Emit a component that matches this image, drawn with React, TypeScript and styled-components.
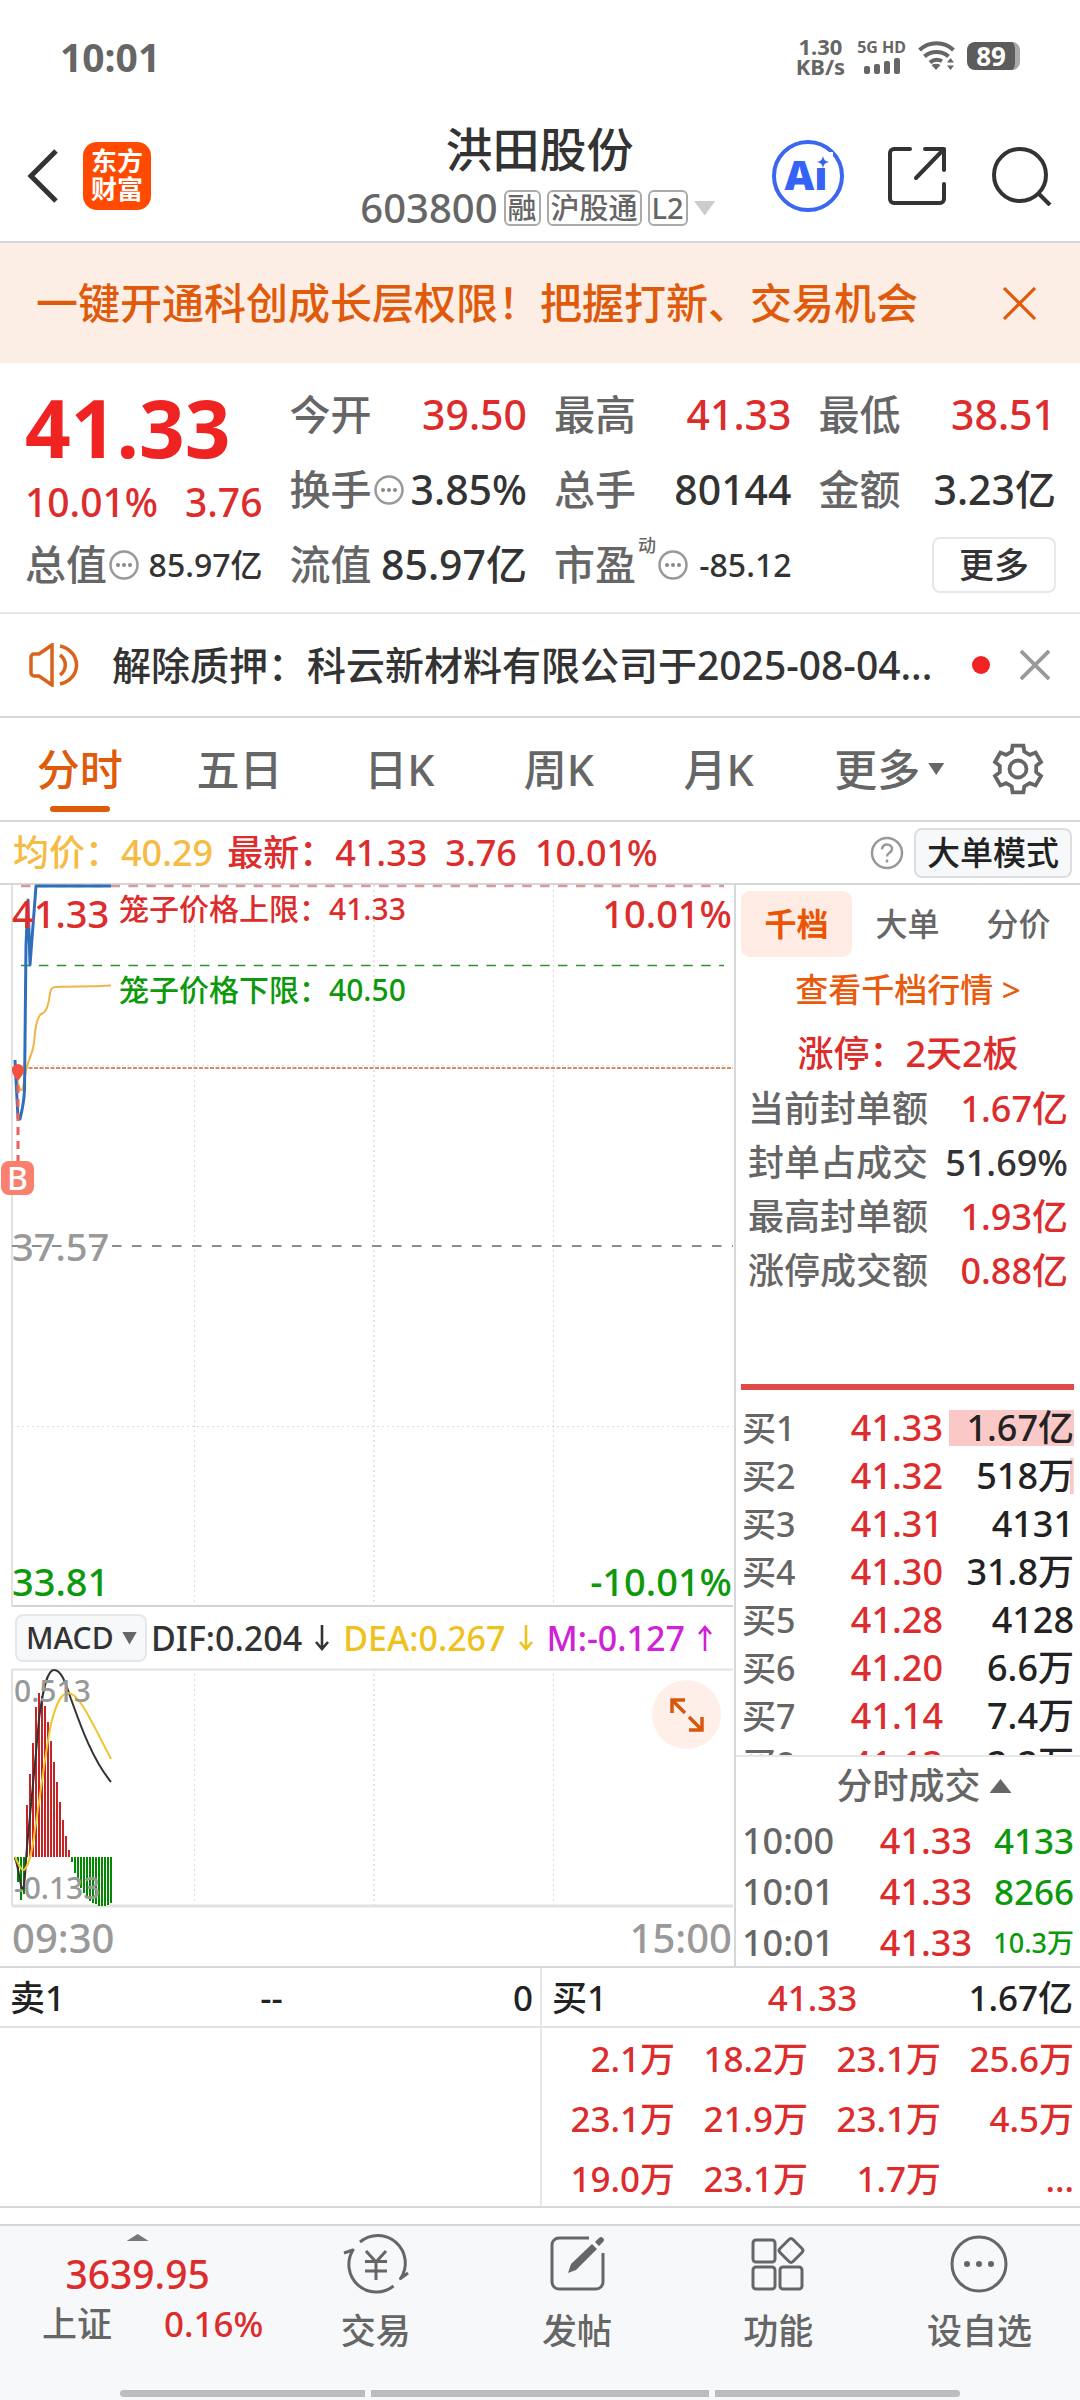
import React from "react";
import styled, { createGlobalStyle, css } from "styled-components";

const c = {
  text: "#333",
  sub: "#666",
  faint: "#999",
  red: "#dd2c2c",
  green: "#0c990c",
  orange: "#e05a0c",
  line: "#d6d7d9",
  soft: "#e6e7e9",
};

const Global = createGlobalStyle`
  * { box-sizing: border-box; }
  body {
    margin: 0;
    background: #fff;
    color: ${c.text};
    font-family: "Noto Sans", "Noto Sans CJK SC", sans-serif;
    font-weight: 500;
    line-height: 1;
  }
  button, select {
    font: inherit;
    color: inherit;
    border: 0;
    padding: 0;
    margin: 0;
    background: none;
    white-space: nowrap;
  }
  h1, p, dl, dd, dt { margin: 0; font-weight: inherit; }
  svg { display: block; flex: none; }
  table { border-collapse: collapse; width: 100%; table-layout: fixed; }
  th, td { padding: 0; font-weight: inherit; white-space: nowrap; }
`;

type Tone = "text" | "sub" | "faint" | "red" | "green" | "orange";

const Page = styled.div`
  display: flex;
  flex-direction: column;
  min-height: 100vh;
  overflow: hidden;
`;

/* ---------- status bar ---------- */
const StatusBar = styled.div`
  display: flex;
  align-items: center;
  justify-content: space-between;
  height: 112px;
  padding: 0 60px;
  color: ${c.sub};
  font-weight: 700;
`;
const Clock = styled.span`
  font-size: 39px;
`;
const StatusRight = styled.div`
  display: flex;
  align-items: center;
  gap: 12px;
`;
const StatusStack = styled.div<{ $size: number }>`
  display: flex;
  flex-direction: column;
  align-items: center;
  gap: 2px;
  font-size: ${(p) => p.$size}px;
  line-height: 18px;
`;
const Battery = styled.span`
  display: flex;
  align-items: center;
  justify-content: center;
  width: 53px;
  height: 28px;
  border-radius: 8px;
  background: #5c5c5c;
  border-right: 5px solid #aaa;
  color: #fff;
  font-size: 26px;
  font-weight: 700;
`;

/* ---------- header ---------- */
const Header = styled.header`
  display: grid;
  grid-template-columns: 1fr auto 1fr;
  align-items: center;
  height: 131px;
  padding: 0 28px 2px 27px;
  border-bottom: 2px solid ${c.line};
`;
const HeaderSide = styled.div<{ $end?: boolean }>`
  display: flex;
  align-items: center;
  gap: ${(p) => (p.$end ? 44 : 24)}px;
  justify-content: ${(p) => (p.$end ? "flex-end" : "flex-start")};
`;
const Logo = styled.div`
  width: 68px;
  height: 68px;
  border-radius: 14px;
  background: #ff4a00;
  color: #fff;
  font-size: 26px;
  font-weight: 700;
  line-height: 28px;
  text-align: center;
  padding-top: 5px;
`;
const TitleBlock = styled.div`
  display: flex;
  flex-direction: column;
  align-items: center;
  gap: 15px;
  padding-top: 3px;
`;
const Title = styled.h1`
  font-size: 47px;
`;
const SubTitle = styled.div`
  display: flex;
  align-items: center;
  gap: 6px;
  padding-right: 3px;
  font-size: 40px;
  color: ${c.sub};
`;
const Tag = styled.span`
  height: 36px;
  padding: 0 2px;
  border: 2px solid #aaa;
  border-radius: 6px;
  font-size: 29px;
  line-height: 31px;
`;
const Triangle = styled.span<{ $w: number; $h: number; $color: string; $up?: boolean }>`
  display: inline-block;
  flex: none;
  width: ${(p) => p.$w}px;
  height: ${(p) => p.$h}px;
  background: ${(p) => p.$color};
  clip-path: ${(p) =>
    p.$up ? "polygon(50% 0, 100% 100%, 0 100%)" : "polygon(0 0, 100% 0, 50% 100%)"};
`;

/* ---------- promo banner ---------- */
const Banner = styled.div`
  display: flex;
  align-items: center;
  justify-content: space-between;
  height: 120px;
  padding: 0 44px 0 36px;
  background: #fdeee5;
  color: ${c.orange};
  font-size: 42px;
`;

/* ---------- quote ---------- */
const Quote = styled.section`
  display: grid;
  grid-template-columns: repeat(4, 1fr);
  grid-auto-rows: 75px;
  column-gap: 27px;
  padding: 14px 24px 10px 25px;
  border-bottom: 2px solid ${c.soft};
`;
const PriceBlock = styled.div`
  grid-row: span 2;
  display: flex;
  flex-direction: column;
  justify-content: space-between;
  padding: 10px 0 6px;
  color: ${c.red};
`;
const BigPrice = styled.div`
  font-size: 80px;
  font-weight: 700;
  color: #f02323;
`;
const Split = styled.div`
  display: flex;
  justify-content: space-between;
  font-size: 39px;
`;
const Metric = styled.div`
  display: flex;
  align-items: center;
  gap: 2px;
  font-size: 41px;
`;
const MetricLabel = styled.span`
  color: ${c.sub};
`;
const MetricSup = styled.sup`
  align-self: flex-start;
  margin-top: 8px;
  font-size: 18px;
  line-height: 20px;
  color: ${c.sub};
`;
const MetricValue = styled.span<{ $tone?: Tone; $small?: boolean }>`
  margin-left: auto;
  font-size: ${(p) => (p.$small ? 32 : 41)}px;
  color: ${(p) => c[p.$tone || "text"]};
`;
const MoreButton = styled.button`
  align-self: center;
  justify-self: end;
  width: 124px;
  height: 56px;
  border: 2px solid ${c.soft};
  border-radius: 8px;
  font-size: 35px;
`;

/* ---------- notice ---------- */
const Notice = styled.div`
  display: flex;
  align-items: center;
  height: 104px;
  padding: 0 30px 0 28px;
  border-bottom: 2px solid ${c.line};
`;
const NoticeText = styled.p`
  flex: 1;
  margin-left: 32px;
  font-size: 39px;
  line-height: 56px;
  white-space: nowrap;
  overflow: hidden;
`;
const Dot = styled.span`
  width: 18px;
  height: 18px;
  margin: 0 30px 0 18px;
  border-radius: 50%;
  background: #f02323;
`;

/* ---------- period tabs ---------- */
const Periods = styled.nav`
  display: grid;
  grid-template-columns: repeat(6, 4fr) 3fr;
  height: 104px;
  padding-right: 2px;
  border-bottom: 2px solid ${c.line};
`;
const Period = styled.button<{ $on?: boolean }>`
  position: relative;
  display: flex;
  align-items: center;
  justify-content: center;
  gap: 8px;
  font-size: 43px;
  color: ${(p) => (p.$on ? c.orange : c.sub)};
  ${(p) =>
    p.$on &&
    css`
      &::after {
        content: "";
        position: absolute;
        bottom: 8px;
        width: 60px;
        height: 6px;
        border-radius: 3px;
        background: ${c.orange};
      }
    `}
`;
const MorePeriods = styled(Period)`
  justify-content: flex-end;
  padding-right: 14px;
`;

/* ---------- averages line ---------- */
const InfoBar = styled.div`
  display: flex;
  align-items: center;
  height: 63px;
  padding: 0 8px 0 13px;
  border-bottom: 2px solid ${c.line};
  font-size: 36px;
  color: ${c.red};
`;
const Average = styled.span`
  margin-right: 14px;
  color: #f5bb45;
`;
const InfoValue = styled.span`
  margin-right: 18px;
`;
const ModeButton = styled.button`
  height: 50px;
  margin-left: 10px;
  padding: 0 11px;
  border: 2px solid #dcdee2;
  border-radius: 8px;
  background: #f7f8fa;
  color: #222;
  font-size: 33px;
`;
const HelpButton = styled.button`
  margin-left: auto;
`;

/* ---------- main body ---------- */
const Body = styled.main`
  display: flex;
  border-bottom: 2px solid ${c.line};
`;
const ChartColumn = styled.section`
  flex: 1;
  min-width: 0;
`;
const Plot = styled.div`
  position: relative;
  > svg {
    width: 100%;
    height: auto;
    overflow: visible;
  }
`;
const PlotLabel = styled.span<{
  $tone: Tone;
  $size: number;
  $top?: number;
  $bottom?: number;
  $left?: number;
  $right?: number;
}>`
  position: absolute;
  color: ${(p) => c[p.$tone]};
  font-size: ${(p) => p.$size}px;
  ${(p) => (p.$top !== undefined ? `top: ${p.$top}px;` : "")}
  ${(p) => (p.$bottom !== undefined ? `bottom: ${p.$bottom}px;` : "")}
  ${(p) => (p.$left !== undefined ? `left: ${p.$left}px;` : "")}
  ${(p) => (p.$right !== undefined ? `right: ${p.$right}px;` : "")}
`;
const TradeMark = styled.span`
  position: absolute;
  left: 1px;
  top: 276px;
  width: 33px;
  height: 34px;
  border-radius: 8px;
  background: #f9806f;
  color: #fff;
  font-size: 32px;
  line-height: 34px;
  text-align: center;
`;
const IndicatorBar = styled.div`
  display: flex;
  align-items: center;
  height: 62px;
  padding-left: 15px;
  font-size: 34px;
`;
const IndicatorPick = styled.label`
  position: relative;
  display: flex;
  align-items: center;
  width: 132px;
  height: 48px;
  margin-right: 4px;
  border: 2px solid ${c.soft};
  border-radius: 8px;
  background: #f7f8fa;
  font-size: 30px;
  select {
    appearance: none;
    width: 100%;
    height: 100%;
    padding-left: 9px;
    outline: 0;
  }
  span {
    position: absolute;
    right: 8px;
    pointer-events: none;
  }
`;
const Reading = styled.span<{ $color: string }>`
  display: flex;
  align-items: center;
  gap: 13px;
  margin-right: 14px;
  color: ${(p) => p.$color};
`;
const ExpandButton = styled.button`
  position: absolute;
  right: 13px;
  top: 11px;
  display: flex;
  align-items: center;
  justify-content: center;
  width: 69px;
  height: 69px;
  border-radius: 50%;
  background: #fef0e8;
`;
const TimeAxis = styled.div`
  display: flex;
  justify-content: space-between;
  align-items: center;
  height: 59px;
  padding: 2px 2px 0 12px;
  font-size: 40px;
  color: ${c.faint};
`;

/* ---------- side panel ---------- */
const Side = styled.aside`
  display: flex;
  flex-direction: column;
  width: 346px;
  border-left: 2px solid ${c.line};
`;
const SideTabs = styled.div`
  display: grid;
  grid-template-columns: repeat(3, 1fr);
  height: 66px;
  margin: 6px 6px 0 5px;
`;
const SideTab = styled.button<{ $on?: boolean }>`
  border-radius: 9px;
  font-size: 32px;
  color: ${(p) => (p.$on ? "#ea5504" : c.sub)};
  font-weight: ${(p) => (p.$on ? 700 : 500)};
  background: ${(p) => (p.$on ? "#feece4" : "none")};
`;
const SideLink = styled.a`
  align-self: center;
  line-height: 65px;
  font-size: 33px;
  color: #ea5a0c;
  text-decoration: none;
`;
const LimitTitle = styled.p`
  text-align: center;
  font-size: 36px;
  line-height: 64px;
  color: ${c.red};
`;
const SealList = styled.dl`
  padding: 0 12px 86px 12px;
  margin-top: -4px;
`;
const SealRow = styled.div`
  display: flex;
  justify-content: space-between;
  align-items: center;
  height: 54px;
  font-size: 36px;
`;
const SealLabel = styled.dt`
  color: ${c.sub};
`;
const SealValue = styled.dd<{ $tone: Tone }>`
  color: ${(p) => c[p.$tone]};
`;
const RedBar = styled.div`
  height: 6px;
  margin: 0 6px 0 5px;
  background: #df4b4b;
`;
const BookScroll = styled.div`
  height: 367px;
  padding: 14px 6px 0 6px;
  overflow: hidden;
  border-bottom: 2px solid ${c.soft};
`;
const BookRow = styled.tr`
  height: 48px;
  font-size: 36px;
`;
const BookLabel = styled.th`
  width: 80px;
  text-align: left;
  font-size: 34px;
  color: ${c.sub};
`;
const BookPrice = styled.td`
  text-align: right;
  color: ${c.red};
`;
const BookVolume = styled.td`
  width: 131px;
  padding-left: 6px;
`;
const VolumeBar = styled.div`
  height: 36px;
  line-height: 36px;
  text-align: right;
  color: #222;
  background: linear-gradient(#fbc8c8, #fbc8c8) right / var(--fill) 100% no-repeat;
`;
const DealsToggle = styled.button`
  display: flex;
  align-items: center;
  justify-content: center;
  gap: 9px;
  height: 58px;
  padding-left: 32px;
  font-size: 36px;
  color: ${c.sub};
`;
const Deals = styled.div`
  height: 150px;
  padding: 0 6px;
`;
const DealRow = styled.tr`
  height: 51px;
  font-size: 36px;
`;
const DealTime = styled.td`
  color: ${c.sub};
`;
const DealPrice = styled.td`
  width: 130px;
  text-align: right;
  color: ${c.red};
`;
const DealVolume = styled.td<{ $small?: boolean }>`
  width: 102px;
  text-align: right;
  color: ${c.green};
  font-size: ${(p) => (p.$small ? 27 : 35)}px;
`;

/* ---------- level-2 queue ---------- */
const Queue = styled.section`
  display: grid;
  grid-template-columns: 1fr 1fr;
  border-bottom: 2px solid ${c.line};
`;
const QueueSide = styled.div`
  & + & {
    border-left: 2px solid ${c.soft};
  }
`;
const QueueHead = styled.div`
  display: grid;
  grid-template-columns: 1fr 1fr 1fr;
  align-items: center;
  height: 60px;
  padding: 0 7px 0 10px;
  border-bottom: 2px solid #dfe3e4;
  font-size: 35px;
  color: #222;
`;
const QueueCell = styled.span<{ $align?: string; $tone?: Tone }>`
  text-align: ${(p) => p.$align || "left"};
  color: ${(p) => (p.$tone ? c[p.$tone] : "inherit")};
`;
const QueueTable = styled.table`
  width: calc(100% - 6px);
  margin-bottom: -2px;
`;
const QueueRow = styled.tr`
  height: 60px;
  font-size: 35px;
  text-align: right;
  color: ${c.red};
`;

/* ---------- bottom navigation ---------- */
const BottomBar = styled.footer`
  margin-top: 16px;
  flex: 1;
  display: flex;
  flex-direction: column;
  border-top: 2px solid ${c.line};
  background: #f7f8fa;
`;
const NavRow = styled.nav`
  display: grid;
  grid-template-columns: 275fr repeat(4, 201fr);
  height: 164px;
`;
const IndexButton = styled.button`
  display: flex;
  flex-direction: column;
  align-items: center;
  padding-top: 8px;
  color: ${c.red};
  font-size: 39px;
`;
const IndexValue = styled.span`
  margin-top: 13px;
`;
const IndexRow = styled.span`
  display: flex;
  gap: 52px;
  margin-top: 13px;
  padding-left: 30px;
  font-size: 35px;
`;
const IndexName = styled.span`
  color: ${c.sub};
`;
const NavItem = styled.button`
  display: flex;
  flex-direction: column;
  align-items: center;
  gap: 18px;
  padding-top: 7px;
  font-size: 35px;
  color: ${c.sub};
`;
const Gesture = styled.div`
  display: grid;
  grid-template-columns: 245fr 338fr 245fr;
  gap: 6px;
  margin: 0 120px;
  height: 7px;
  border-radius: 4px;
  overflow: hidden;
`;
const GesturePart = styled.span`
  background: #bcbdbf;
`;

/* ---------- icons ---------- */
const Cross = ({ size, color, w }: { size: number; color: string; w: number }) => (
  <svg width={size} height={size} viewBox="0 0 32 32" stroke={color} strokeWidth={w} fill="none">
    <path d="M1 1 31 31M31 1 1 31" />
  </svg>
);

const Ellipsis = () => (
  <svg width="30" height="30" viewBox="0 0 30 30" fill="#888">
    <circle cx="15" cy="15" r="13.500" fill="none" stroke="#999" strokeWidth="2.500" />
    <circle cx="9" cy="15" r="2" />
    <circle cx="15" cy="15" r="2" />
    <circle cx="21" cy="15" r="2" />
  </svg>
);

const Arrow = ({ up }: { up?: boolean }) => (
  <svg width="14" height="28" viewBox="0 0 14 28" fill="none" stroke="currentColor" strokeWidth="2.6">
    {up ? <path d="M7 27V3M1 10l6-7 6 7" /> : <path d="M7 1v24M1 18l6 7 6-7" />}
  </svg>
);

/* Outline of a six-toothed wheel: each tooth gives two root and two tip points. */
const gearPoints = Array.from({ length: 6 }, (_, i) => {
  const at = (r: number, deg: number) => {
    const a = ((i * 60 - 90 + deg) * Math.PI) / 180;
    return `${(27 + r * Math.cos(a)).toFixed(1)},${(27 + r * Math.sin(a)).toFixed(1)}`;
  };
  return [at(18.5, -20), at(24, -13), at(24, 13), at(18.5, 20)].join(" ");
}).join(" ");

const Gear = () => (
  <svg width="54" height="54" viewBox="0 0 54 54" fill="none" stroke="#666" strokeWidth="3.800">
    <polygon points={gearPoints} />
    <circle cx="27" cy="27" r="8.500" />
  </svg>
);

/* ---------- data ---------- */
const book = [
  { label: "买1", price: "41.33", volume: "1.67亿", fill: 100 },
  { label: "买2", price: "41.32", volume: "518万", fill: 3 },
  { label: "买3", price: "41.31", volume: "4131", fill: 0 },
  { label: "买4", price: "41.30", volume: "31.8万", fill: 0 },
  { label: "买5", price: "41.28", volume: "4128", fill: 0 },
  { label: "买6", price: "41.20", volume: "6.6万", fill: 0 },
  { label: "买7", price: "41.14", volume: "7.4万", fill: 0 },
  { label: "买8", price: "41.13", volume: "2.2万", fill: 0 },
];
const seals: { label: string; value: string; tone: Tone }[] = [
  { label: "当前封单额", value: "1.67亿", tone: "red" },
  { label: "封单占成交", value: "51.69%", tone: "text" },
  { label: "最高封单额", value: "1.93亿", tone: "red" },
  { label: "涨停成交额", value: "0.88亿", tone: "red" },
];
const deals = [
  { time: "10:00", price: "41.33", volume: "4133" },
  { time: "10:01", price: "41.33", volume: "8266" },
  { time: "10:01", price: "41.33", volume: "10.3万" },
];
const queue = [
  ["2.1万", "18.2万", "23.1万", "25.6万"],
  ["23.1万", "21.9万", "23.1万", "4.5万"],
  ["19.0万", "23.1万", "1.7万", "..."],
];
const macdBars = [
  -3, -25, -43, -37, 52, 83, 114, 150, 164, 161, 151, 135, 116, 95, 75, 55, 37, 21, 7, -5, -16, -25,
  -31, -36, -40, -44, -46, -47, -49, -49, -49, -48, -46,
];

const PriceChart = () => (
  <svg viewBox="0 0 734 722" fill="none" role="img" aria-label="分时走势">
    <g stroke="#d4d4d4" strokeDasharray="2 3">
      <path d="M194.500 0V721M553.500 0V721M12 180.500H733M12 541.500H733" strokeOpacity=".8" />
      <path d="M374 0V721" stroke="#e4e4e4" strokeWidth="2" />
    </g>
    <path d="M12 0V721" stroke="#e2e2e2" strokeWidth="2" />
    <path d="M12 721H733" stroke="#d4d4d4" strokeWidth="2" />
    <path d="M21 1H724" stroke="#d39c9c" strokeWidth="2.500" strokeDasharray="9.500 8.400" />
    <path d="M21 80.500H724" stroke="#2f8f2f" strokeWidth="1.500" strokeDasharray="9.500 8.400" />
    <path d="M12 183H733" stroke="#c06a30" strokeWidth="1.500" strokeDasharray="4 1.500" />
    <path d="M12 361H733" stroke="#8c8c8c" strokeWidth="2" strokeDasharray="9.500 10.500" />
    <path
      d="M15 180C18 200 19 206 22 205C25 196 25 188 27 182C29 172 32 172 34 158C35 148 35 137 40 130C43 127 46 130 49 115C50 109 50 102 55 102C70 101 90 102 111 100.500"
      stroke="#f0b54a"
      strokeWidth="2"
    />
    <path
      d="M15 175 18 233 20 234C22 226 24 216 24.500 205L26 60 28 15 30 80 36 1H111"
      stroke="#2f6fba"
      strokeWidth="3"
      strokeLinejoin="round"
    />
    <path d="M18 200V276" stroke="#f0605a" strokeWidth="3" strokeDasharray="8 6" />
    <path d="M18 196c-3-4-6-7-6-11a6 6 0 0 1 12 0c0 4-3 7-6 11z" fill="#f4513f" />
  </svg>
);

const MacdChart = () => (
  <svg viewBox="0 0 734 238" fill="none" role="img" aria-label="MACD">
    <g stroke="#d4d4d4" strokeDasharray="2 3">
      <path d="M194.500 0V237M553.500 0V237" strokeOpacity=".8" />
      <path d="M374 0V237" stroke="#e4e4e4" strokeWidth="2" />
    </g>
    <path d="M12 0V237M12 .5H733" stroke="#e2e2e2" strokeWidth="2" />
    <path d="M12 237H733" stroke="#e2e2e2" strokeWidth="3" />
    {macdBars.map((v, i) => (
      <rect
        key={i}
        x={14 + i * 3}
        y={v > 0 ? 188 - v : 188}
        width="2"
        height={Math.abs(v)}
        shapeRendering="crispEdges"
        fill={v > 0 ? "#c62424" : "#048804"}
      />
    ))}
    <path
      d="M15 188C19 202 20 214 22 220C25 222 25 200 27 178C30 150 35 95 39 50C43 20 47 1 54 1C61 1 65 12 71 30C80 55 92 90 111 113"
      stroke="#333"
      strokeWidth="2"
    />
    <path
      d="M15 188C18 194 21 202 24 201C29 196 32 185 35 160C40 130 45 85 51 55C56 35 61 24 68 24C78 24 88 45 111 90"
      stroke="#efc52c"
      strokeWidth="2"
    />
  </svg>
);

export default function App() {
  return (
    <Page lang="zh-CN">
      <Global />
      <StatusBar>
        <Clock>10:01</Clock>
        <StatusRight>
          <StatusStack $size={22}>
            <span>1.30</span>
            <span>KB/s</span>
          </StatusStack>
          <StatusStack $size={16}>
            <span>5G HD</span>
            <svg width="36" height="16" viewBox="0 0 36 16" fill="#666">
              <rect x="0" y="8" width="6" height="8" rx="2" />
              <rect x="10" y="6" width="6" height="10" rx="2" />
              <rect x="20" y="3" width="6" height="13" rx="2" />
              <rect x="30" y="0" width="6" height="16" rx="2" />
            </svg>
          </StatusStack>
          <svg width="37" height="30" viewBox="0 0 37 30" fill="none" stroke="#666" strokeWidth="4">
            <path d="M1.500 9C11 0 26 0 35.500 9M6.500 15.500C13 9.500 24 9.500 30.500 15.500M12 21.500C16 18 20 18 24 20" />
            <path d="M13.500 24q4.500-2.500 9 0L18 29z" fill="#666" stroke="none" />
            <path d="M29 21.500 32.500 17l3.500 4.500zM29 24.500l3.500 4.500 3.500-4.500z" fill="#666" stroke="none" />
          </svg>
          <Battery>89</Battery>
        </StatusRight>
      </StatusBar>

      <Header>
        <HeaderSide>
          <button aria-label="返回">
            <svg width="32" height="54" viewBox="0 0 32 54" fill="none" stroke="#333" strokeWidth="5">
              <path d="M29 2 4 27l25 25" />
            </svg>
          </button>
          <Logo>
            东方
            <br />
            财富
          </Logo>
        </HeaderSide>
        <TitleBlock>
          <Title>洪田股份</Title>
          <SubTitle>
            603800
            <Tag>融</Tag>
            <Tag>沪股通</Tag>
            <Tag>L2</Tag>
            <Triangle $w={22} $h={15} $color="#ccc" />
          </SubTitle>
        </TitleBlock>
        <HeaderSide $end>
          <button aria-label="AI 助手">
            <svg width="72" height="72" viewBox="0 0 72 72">
              <circle cx="36" cy="36" r="34" fill="#fff" stroke="#3b66f0" strokeWidth="4" />
              <text
                x="34"
                y="50"
                textAnchor="middle"
                fontFamily="Noto Sans, sans-serif"
                fontSize="41"
                fontWeight="900"
                fill="#3563f5"
              >
                Ai
              </text>
              <rect x="43" y="12" width="18" height="16" fill="#fff" />
              <path d="M51 16c1 4 2 5 6 6-4 1-5 2-6 6-1-4-2-5-6-6 4-1 5-2 6-6z" fill="#3563f5" />
            </svg>
          </button>
          <button aria-label="分享">
            <svg
              width="60"
              height="60"
              viewBox="0 0 60 60"
              fill="none"
              stroke="#333"
              strokeWidth="4"
              strokeLinecap="round"
              strokeLinejoin="round"
            >
              <path d="M22 3H6a4 4 0 0 0-4 4v46a4 4 0 0 0 4 4h46a4 4 0 0 0 4-4V38" />
              <path d="M37 3h19v21M56 3 28 32" />
            </svg>
          </button>
          <button aria-label="搜索">
            <svg width="60" height="60" viewBox="0 0 60 60" fill="none" stroke="#333" strokeWidth="4">
              <circle cx="28" cy="29" r="26" />
              <path d="M46 47 58 59" />
            </svg>
          </button>
        </HeaderSide>
      </Header>

      <Banner>
        <span>一键开通科创成长层权限！把握打新、交易机会</span>
        <button aria-label="关闭">
          <Cross size={33} color={c.orange} w={3} />
        </button>
      </Banner>

      <Quote>
        <PriceBlock>
          <BigPrice>41.33</BigPrice>
          <Split>
            <span>10.01%</span>
            <span>3.76</span>
          </Split>
        </PriceBlock>
        <Metric>
          <MetricLabel>今开</MetricLabel>
          <MetricValue $tone="red">39.50</MetricValue>
        </Metric>
        <Metric>
          <MetricLabel>最高</MetricLabel>
          <MetricValue $tone="red">41.33</MetricValue>
        </Metric>
        <Metric>
          <MetricLabel>最低</MetricLabel>
          <MetricValue $tone="red">38.51</MetricValue>
        </Metric>
        <Metric>
          <MetricLabel>换手</MetricLabel>
          <Ellipsis />
          <MetricValue>3.85%</MetricValue>
        </Metric>
        <Metric>
          <MetricLabel>总手</MetricLabel>
          <MetricValue>80144</MetricValue>
        </Metric>
        <Metric>
          <MetricLabel>金额</MetricLabel>
          <MetricValue>3.23亿</MetricValue>
        </Metric>
        <Metric>
          <MetricLabel>总值</MetricLabel>
          <Ellipsis />
          <MetricValue $small>85.97亿</MetricValue>
        </Metric>
        <Metric>
          <MetricLabel>流值</MetricLabel>
          <MetricValue>85.97亿</MetricValue>
        </Metric>
        <Metric>
          <MetricLabel>市盈</MetricLabel>
          <MetricSup>动</MetricSup>
          <Ellipsis />
          <MetricValue $small>-85.12</MetricValue>
        </Metric>
        <MoreButton>更多</MoreButton>
      </Quote>

      <Notice>
        <svg width="52" height="44" viewBox="0 0 52 44" fill="none" stroke="#d9631c" strokeWidth="3.500">
          <path d="M24 2 11 11H6a3 3 0 0 0-3 3v16a3 3 0 0 0 3 3h5l13 9z" />
          <path d="M32 12c7 5 7 15 0 20M32 3c22 5 22 33 0 38" />
        </svg>
        <NoticeText>解除质押：科云新材料有限公司于2025-08-04...</NoticeText>
        <Dot />
        <button aria-label="关闭公告">
          <Cross size={30} color="#999" w={4} />
        </button>
      </Notice>

      <Periods>
        <Period $on>分时</Period>
        <Period>五日</Period>
        <Period>日K</Period>
        <Period>周K</Period>
        <Period>月K</Period>
        <MorePeriods>
          更多
          <Triangle $w={16} $h={12} $color="#666" />
        </MorePeriods>
        <Period aria-label="设置">
          <Gear />
        </Period>
      </Periods>

      <InfoBar>
        <Average>均价：40.29</Average>
        <InfoValue>最新：41.33</InfoValue>
        <InfoValue>3.76</InfoValue>
        <InfoValue>10.01%</InfoValue>
        <HelpButton aria-label="说明">
          <svg width="34" height="34" viewBox="0 0 34 34" fill="none" stroke="#999" strokeWidth="2.500">
            <circle cx="17" cy="17" r="15" />
            <path d="M12 13.500c0-7 10-6 10-.5 0 4-5 3.500-5 7.500" />
            <path d="M17 23.500v3" />
          </svg>
        </HelpButton>
        <ModeButton>大单模式</ModeButton>
      </InfoBar>

      <Body>
        <ChartColumn>
          <Plot>
            <PriceChart />
            <PlotLabel $tone="red" $size={38} $left={12} $top={9}>41.33</PlotLabel>
            <PlotLabel $tone="red" $size={30} $left={119} $top={9}>笼子价格上限：41.33</PlotLabel>
            <PlotLabel $tone="red" $size={38} $right={2} $top={9}>10.01%</PlotLabel>
            <PlotLabel $tone="green" $size={30} $left={119} $top={90}>笼子价格下限：40.50</PlotLabel>
            <PlotLabel $tone="faint" $size={38} $left={12} $top={342}>37.57</PlotLabel>
            <PlotLabel $tone="green" $size={38} $left={12} $bottom={7}>33.81</PlotLabel>
            <PlotLabel $tone="green" $size={38} $right={2} $bottom={7}>-10.01%</PlotLabel>
            <TradeMark>B</TradeMark>
          </Plot>
          <IndicatorBar>
            <IndicatorPick>
              <select aria-label="指标" defaultValue="MACD">
                <option>MACD</option>
              </select>
              <Triangle $w={15} $h={13} $color="#666" />
            </IndicatorPick>
            <Reading $color="#333">DIF:0.204<Arrow /></Reading>
            <Reading $color="#efc11c">DEA:0.267<Arrow /></Reading>
            <Reading $color="#d020d8">M:-0.127<Arrow up /></Reading>
          </IndicatorBar>
          <Plot>
            <MacdChart />
            <PlotLabel $tone="faint" $size={30} $left={14} $top={7}>0.513</PlotLabel>
            <PlotLabel $tone="faint" $size={30} $left={14} $bottom={4}>-0.133</PlotLabel>
            <ExpandButton aria-label="全屏">
              <svg width="34" height="34" viewBox="0 0 34 34" fill="none" stroke="#d9560f" strokeWidth="3.500">
                <path d="M2 15V2h13M2 2l13 13M32 19v13H19M32 32 19 19" />
              </svg>
            </ExpandButton>
          </Plot>
          <TimeAxis>
            <span>09:30</span>
            <span>15:00</span>
          </TimeAxis>
        </ChartColumn>

        <Side>
          <SideTabs>
            <SideTab $on>千档</SideTab>
            <SideTab>大单</SideTab>
            <SideTab>分价</SideTab>
          </SideTabs>
          <SideLink href="#depth">查看千档行情 &gt;</SideLink>
          <LimitTitle>涨停：2天2板</LimitTitle>
          <SealList>
            {seals.map((s) => (
              <SealRow key={s.label}>
                <SealLabel>{s.label}</SealLabel>
                <SealValue $tone={s.tone}>{s.value}</SealValue>
              </SealRow>
            ))}
          </SealList>
          <RedBar />
          <BookScroll>
            <table>
              <tbody>
                {book.map((b) => (
                  <BookRow key={b.label}>
                    <BookLabel scope="row">{b.label}</BookLabel>
                    <BookPrice>{b.price}</BookPrice>
                    <BookVolume>
                      <VolumeBar style={{ "--fill": `${b.fill}%` } as React.CSSProperties}>
                        {b.volume}
                      </VolumeBar>
                    </BookVolume>
                  </BookRow>
                ))}
              </tbody>
            </table>
          </BookScroll>
          <DealsToggle>
            分时成交
            <Triangle $w={22} $h={14} $color="#666" $up />
          </DealsToggle>
          <Deals>
            <table>
              <tbody>
                {deals.map((d, i) => (
                  <DealRow key={i}>
                    <DealTime>{d.time}</DealTime>
                    <DealPrice>{d.price}</DealPrice>
                    <DealVolume $small={d.volume.length > 4}>{d.volume}</DealVolume>
                  </DealRow>
                ))}
              </tbody>
            </table>
          </Deals>
        </Side>
      </Body>

      <Queue>
        <QueueSide>
          <QueueHead>
            <QueueCell>卖1</QueueCell>
            <QueueCell $align="center">--</QueueCell>
            <QueueCell $align="right">0</QueueCell>
          </QueueHead>
        </QueueSide>
        <QueueSide>
          <QueueHead>
            <QueueCell>买1</QueueCell>
            <QueueCell $align="center" $tone="red">41.33</QueueCell>
            <QueueCell $align="right">1.67亿</QueueCell>
          </QueueHead>
          <QueueTable>
            <tbody>
              {queue.map((row, i) => (
                <QueueRow key={i}>
                  {row.map((v, j) => (
                    <td key={j}>{v}</td>
                  ))}
                </QueueRow>
              ))}
            </tbody>
          </QueueTable>
        </QueueSide>
      </Queue>

      <BottomBar>
        <NavRow>
          <IndexButton>
            <Triangle $w={22} $h={7} $color="#777" $up />
            <IndexValue>3639.95</IndexValue>
            <IndexRow>
              <IndexName>上证</IndexName>
              <span>0.16%</span>
            </IndexRow>
          </IndexButton>
          <NavItem>
            <svg width="66" height="62" viewBox="0 0 66 62" fill="none" stroke="#666" strokeWidth="3" strokeLinejoin="round">
              <path d="M17 9A27.500 27.500 0 0 1 57.500 45.500L65 40" />
              <path d="M50.500 53A27.500 27.500 0 0 1 10 17L1 20" />
              <path d="M23 18l10 11 10-11M22 28.500h22M22 38h22M33 29v18" />
            </svg>
            交易
          </NavItem>
          <NavItem>
            <svg width="58" height="62" viewBox="0 0 58 62" fill="none" stroke="#666" strokeWidth="3">
              <path d="M41 5H11a7 7 0 0 0-7 7v37a7 7 0 0 0 7 7h37a7 7 0 0 0 7-7V20" />
              <path d="M20 40l3-9 21-20 5 5-21 21z" fill="#666" stroke="none" />
              <path d="M47 9l4-4q2-2 4 0t0 4l-4 4z" fill="#666" stroke="none" />
            </svg>
            发帖
          </NavItem>
          <NavItem>
            <svg width="58" height="62" viewBox="0 0 58 62" fill="none" stroke="#666" strokeWidth="3">
              <rect x="4" y="7" width="22" height="22" rx="3" />
              <rect x="4" y="34" width="22" height="22" rx="3" />
              <rect x="31" y="34" width="22" height="22" rx="3" />
              <path d="M40 6.500q2-2 4 0l9 9q2 2 0 4l-9 9q-2 2-4 0l-9-9q-2-2 0-4z" />
            </svg>
            功能
          </NavItem>
          <NavItem>
            <svg width="58" height="62" viewBox="0 0 58 62" fill="none" stroke="#666" strokeWidth="3">
              <circle cx="29" cy="31" r="27" />
              <g fill="#666" stroke="none">
                <circle cx="17" cy="31" r="3" />
                <circle cx="29" cy="31" r="3" />
                <circle cx="41" cy="31" r="3" />
              </g>
            </svg>
            设自选
          </NavItem>
        </NavRow>
        <Gesture>
          <GesturePart />
          <GesturePart />
          <GesturePart />
        </Gesture>
      </BottomBar>
    </Page>
  );
}
